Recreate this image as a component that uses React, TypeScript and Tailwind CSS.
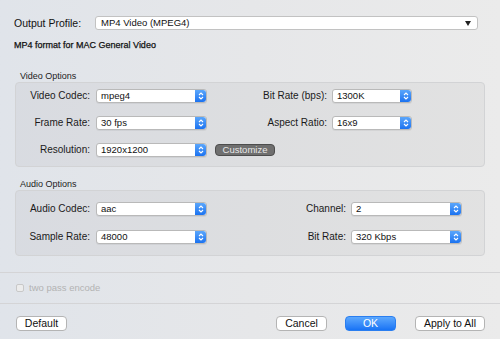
import React from "react";

const font = { fontFamily: '"Liberation Sans", Arial, sans-serif' };

function Stepper() {
  return (
    <div className="flex h-full w-[11px] items-center justify-center rounded-r-[3px] bg-gradient-to-b from-[#5aa6fb] to-[#1a72f0]">
      <svg width="6" height="10" viewBox="0 0 6 10">
        <path d="M1 4 L3 2 L5 4" fill="none" stroke="white" strokeWidth="1.1" />
        <path d="M1 6 L3 8 L5 6" fill="none" stroke="white" strokeWidth="1.1" />
      </svg>
    </div>
  );
}

function Select({ value, w }: { value: string; w: string }) {
  return (
    <div
      className={`flex h-[14px] ${w} items-center rounded-[3px] border border-[#b9b9b9] bg-white shadow-[0_1px_0_rgba(0,0,0,0.05)]`}
    >
      <span className="flex-1 pl-[4px] text-[9.5px] leading-none text-[#111]">{value}</span>
      <Stepper />
    </div>
  );
}

function Label({ text, w }: { text: string; w: string }) {
  return <div className={`${w} text-right text-[10px] leading-none text-[#1a1a1a]`}>{text}</div>;
}

function Button({ text, w, primary }: { text: string; w: string; primary?: boolean }) {
  return (
    <div
      className={`flex h-[15px] ${w} items-center justify-center rounded-[4px] text-[10.5px] leading-none ${
        primary
          ? "border border-[#2a7ef0] bg-gradient-to-b from-[#5ca8fd] to-[#1773f5] text-white"
          : "border border-[#b4b4b4] bg-white text-[#111]"
      }`}
    >
      {text}
    </div>
  );
}

export default function App() {
  return (
    <div
      style={font}
      className="flex h-[339px] w-[500px] flex-col overflow-hidden bg-gradient-to-r from-[#e0e4ea] via-[#e6e7e9] to-[#ebebeb]"
    >
      {/* Output profile */}
      <div className="mt-[16px] flex h-[14px] items-center pl-[14px]">
        <div className="w-[81px] text-[10.5px] leading-none text-[#111]">Output Profile:</div>
        <div className="flex h-[14px] w-[383px] items-center rounded-[3px] border border-[#c2c2c2] bg-white">
          <span className="flex-1 pl-[5px] text-[9.5px] leading-none text-[#111]">MP4 Video (MPEG4)</span>
          <svg width="6" height="5" viewBox="0 0 6 5" className="mr-[6px]">
            <path d="M0 0 L6 0 L3 5 Z" fill="#222" />
          </svg>
        </div>
      </div>

      <div className="mt-[9px] h-[12px] pl-[14px] text-[9px] leading-[12px] text-[#111] [-webkit-text-stroke:0.25px_#111]">
        MP4 format for MAC General Video
      </div>

      {/* Video options */}
      <div className="mt-[19px] h-[12px] pl-[20px] text-[9px] leading-[12px] text-[#222]">Video Options</div>
      <div className="ml-[15px] flex h-[85px] w-[470px] flex-col gap-[13px] rounded-[4px] border border-[#d2d3d5] bg-[rgba(0,0,0,0.035)] pt-[6px]">
        <div className="flex h-[14px] items-center">
          <Label text="Video Codec:" w="w-[74px]" />
          <div className="ml-[6px]">
            <Select value="mpeg4" w="w-[111px]" />
          </div>
          <Label text="Bit Rate (bps):" w="w-[120px]" />
          <div className="ml-[5px]">
            <Select value="1300K" w="w-[80px]" />
          </div>
        </div>
        <div className="flex h-[14px] items-center">
          <Label text="Frame Rate:" w="w-[74px]" />
          <div className="ml-[6px]">
            <Select value="30 fps" w="w-[111px]" />
          </div>
          <Label text="Aspect Ratio:" w="w-[120px]" />
          <div className="ml-[5px]">
            <Select value="16x9" w="w-[80px]" />
          </div>
        </div>
        <div className="flex h-[14px] items-center">
          <Label text="Resolution:" w="w-[74px]" />
          <div className="ml-[6px]">
            <Select value="1920x1200" w="w-[111px]" />
          </div>
          <div className="ml-[8px] flex h-[12px] w-[60px] items-center justify-center rounded-[4px] border border-[#4d4d4d] bg-[#6f6f6f] text-[9.5px] leading-none text-[#e8e8e8]">
            Customize
          </div>
        </div>
      </div>

      {/* Audio options */}
      <div className="mt-[12px] h-[11px] pl-[20px] text-[9px] leading-[11px] text-[#222]">Audio Options</div>
      <div className="ml-[15px] flex h-[66px] w-[470px] flex-col gap-[14px] rounded-[4px] border border-[#d2d3d5] bg-[rgba(0,0,0,0.035)] pt-[11px]">
        <div className="flex h-[14px] items-center">
          <Label text="Audio Codec:" w="w-[74px]" />
          <div className="ml-[6px]">
            <Select value="aac" w="w-[111px]" />
          </div>
          <Label text="Channel:" w="w-[139px]" />
          <div className="ml-[5px]">
            <Select value="2" w="w-[111px]" />
          </div>
        </div>
        <div className="flex h-[14px] items-center">
          <Label text="Sample Rate:" w="w-[74px]" />
          <div className="ml-[6px]">
            <Select value="48000" w="w-[111px]" />
          </div>
          <Label text="Bit Rate:" w="w-[139px]" />
          <div className="ml-[5px]">
            <Select value="320 Kbps" w="w-[111px]" />
          </div>
        </div>
      </div>

      <div className="mt-[16px] h-px w-full bg-[#d4d4d6]" />
      <div className="flex h-[30px] items-center pl-[16px]">
        <div className="h-[8px] w-[8px] rounded-[2px] border border-[#c8c8c8] bg-[#ececec]" />
        <span className="ml-[5px] text-[9.5px] leading-none text-[#b3b3b3]">two pass encode</span>
      </div>
      <div className="h-px w-full bg-[#d4d4d6]" />

      <div className="mt-[12px] flex h-[15px] items-center pl-[16px] pr-[15px]">
        <Button text="Default" w="w-[51px]" />
        <div className="flex-1" />
        <Button text="Cancel" w="w-[51px]" />
        <div className="ml-[18px]">
          <Button text="OK" w="w-[51px]" primary />
        </div>
        <div className="ml-[19px]">
          <Button text="Apply to All" w="w-[70px]" />
        </div>
      </div>
    </div>
  );
}
